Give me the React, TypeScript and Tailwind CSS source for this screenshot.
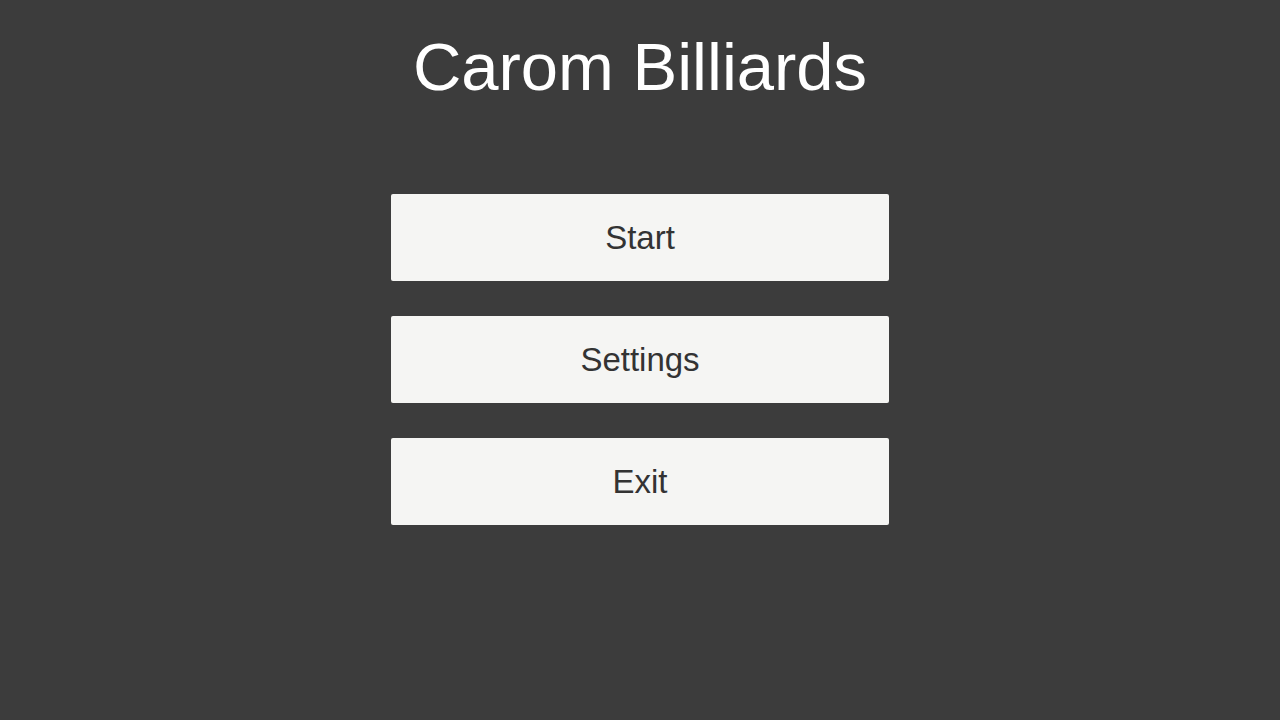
const items = ["Start", "Settings", "Exit"];

export default function App() {
  return (
    <div className="flex h-[720px] w-[1280px] flex-col items-center bg-[#3c3c3c] pt-[33px] font-['Liberation_Sans',Arial,sans-serif]">
      <h1 className="text-[67px] leading-[67px] text-white">Carom Billiards</h1>
      <div className="mt-[94px] flex flex-col gap-[35px]">
        {items.map((label) => (
          <button
            key={label}
            type="button"
            className="flex h-[87px] w-[498px] items-center justify-center rounded-[2px] bg-[#f5f5f3] text-[33px] text-[#333333]"
          >
            {label}
          </button>
        ))}
      </div>
    </div>
  );
}
